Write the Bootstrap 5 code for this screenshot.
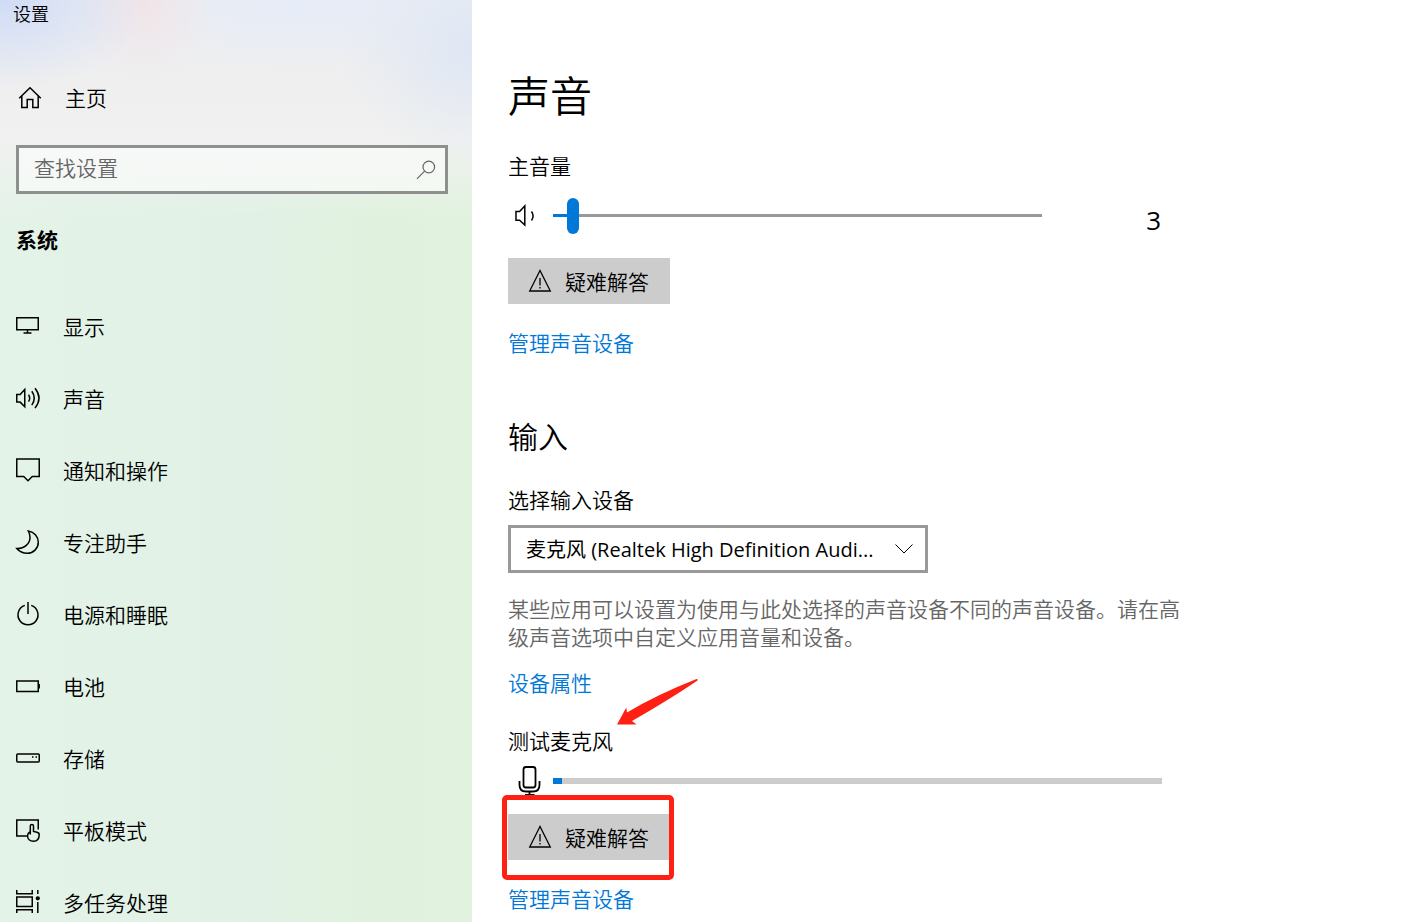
<!DOCTYPE html>
<html lang="zh-CN">
<head>
<meta charset="utf-8">
<meta name="viewport" content="width=device-width, initial-scale=1">
<title>设置</title>
<link href="https://cdn.jsdelivr.net/npm/bootstrap@5.3.0/dist/css/bootstrap.min.css" rel="stylesheet">
<style>
  :root { --accent: #0078d7; --marker: #ff2014; }
  body {
    font-family: "Open Sans", "Noto Sans CJK SC", sans-serif;
    font-size: 21px; line-height: 28px; font-weight: 350; color: #000; background: #fff;
  }
  svg { fill: none; stroke: currentColor; stroke-width: 1.5; flex: none; display: block; overflow: visible; }
  .pane { overflow-y: auto; scrollbar-width: none; }
  .pane::-webkit-scrollbar { display: none; }

  /* navigation pane */
  .side {
    flex: 0 0 472px;
    background:
      radial-gradient(ellipse 150px 90px at 0 0, #d0dcf6, #d0dcf600),
      radial-gradient(ellipse 70px 80px at 145px 0, #f1e5e8, #f1e5e800),
      radial-gradient(ellipse 130px 110px at 100% 50px, #dfe7f4, #dfe7f400),
      radial-gradient(ellipse 170px 70px at 300px 0, #e6ecf8, #e6ecf800),
      linear-gradient(#ebedf2 0, #efefef 90px, #f0f1f0 140px, #f0f1f000 220px),
      linear-gradient(90deg, #e4f3e8, #e1f1e5 55%, #e0f2de 80%, #e1f3df);
  }
  .window-name { font-size: 18px; padding-left: 13px; margin-bottom: 46px; }
  .home-link { height: 48px; padding-left: 18px; gap: 23px; margin-bottom: 23px; }
  .search { margin: 0 24px 32px 16px; border: 3px solid #8d908e; background: #ffffff80; height: 49px; padding-right: 9px; color: #666; }
  .search input { font-size: 21px; line-height: 28px; font-weight: 350; padding: 0 15px 4px; color: #000; }
  .search input::placeholder { color: #666; opacity: 1; }
  .search svg { stroke-width: 1.2; }
  .section-name { font-size: 21px; line-height: 28px; padding-left: 16px; margin-bottom: 37px; }
  .side .nav-link { height: 72px; padding: 0 16px; gap: 23px; color: #000; }

  /* page content */
  .content { padding: 68px 36px 8px; }
  .content-inner { max-width: 680px; }
  h1, h2 { font-weight: 350; }
  h1 { font-size: 42px; line-height: 56px; margin-bottom: 28px; }
  h2 { font-size: 30px; line-height: 40px; margin: 60px 0 29px; }
  .level-row { max-width: 654px; }
  .level-icon { width: 45px; }
  .volume { height: 38px; margin: 16px 0 24px; }
  .level-value { width: 120px; font-size: 26px; font-weight: 400; padding: 9px 1px 0 0; }
  .level-slider { appearance: none; -webkit-appearance: none; height: 36px; min-width: 0; background: none; }
  .level-slider::-webkit-slider-runnable-track {
    height: 3px;
    background: linear-gradient(var(--accent), var(--accent)) no-repeat 0 0 / var(--level) 100%, #999;
  }
  .level-slider::-webkit-slider-thumb {
    -webkit-appearance: none; width: 12px; height: 36px; margin-top: -16px; border-radius: 6px; background: var(--accent);
  }
  .btn-fix {
    width: 162px; height: 46px; padding: 2px 20px 0; gap: 13px; font-size: 21px; line-height: 28px; font-weight: 350;
    color: #000; background: #ccc; border: 0; border-radius: 0;
  }
  .btn-fix:hover { background: #bbb; }
  .btn-fix svg { stroke-width: 1.3; margin-bottom: 2px; }
  .page-link-text { color: var(--accent); text-decoration: none; }
  .after-fix { margin-top: 25px; }
  .device { max-width: 420px; height: 48px; margin: 11px 0 22px; }
  .device select {
    font-size: 20px; line-height: 28px; color: #000; padding: 2px 40px 0 15px; height: 48px;
    border: 3px solid #999; border-radius: 0; background: #fff; font-weight: 400;
  }
  .device svg { right: 14px; top: 16px; stroke-width: 1; pointer-events: none; }
  .hint { color: #666; margin-bottom: 18px; }
  .mic-title { margin: 30px 0 10px; }
  .meter { height: 6px; border-radius: 0; background: #ccc; }
  .meter .progress-bar { background: var(--accent); }
  .mic-row { height: 32px; margin-bottom: 17px; }
  .mic-row .level-icon { padding-left: 10px; }
  .mic-row svg { stroke-width: 1.8; }
  .marker-box { inset: -19px -4px -20px -6px; border: 5px solid var(--marker); border-radius: 5px; pointer-events: none; }
  .marker-arrow { left: 100%; bottom: 29px; margin-left: 3px; color: var(--marker); }
</style>
</head>
<body>
<div class="d-flex vh-100 overflow-hidden">
  <aside class="side pane">
    <div class="window-name">设置</div>
    <a href="#" class="home-link d-flex align-items-center text-reset text-decoration-none">
      <svg width="24" height="24" viewBox="0 0 24 24"><path d="M1.2 12.2 12 1.8l10.8 10.4M3.8 10v11.6h5.4v-8h5.6v8h5.4V10"/></svg>
      <span>主页</span>
    </a>
    <form class="search d-flex align-items-center" role="search">
      <input type="search" class="form-control border-0 bg-transparent shadow-none" placeholder="查找设置" aria-label="查找设置">
      <svg width="20" height="20" viewBox="0 0 20 20"><circle cx="12.8" cy="7" r="5.8"/><path d="M8.6 11.2 1 18.8"/></svg>
    </form>
    <h6 class="section-name fw-bold">系统</h6>
    <nav class="nav flex-column">
      <a class="nav-link d-flex align-items-center" href="#"><svg width="24" height="26" viewBox="0 0 24 26"><path d="M.75 3.75h21.5v12H.75zM7.5 19h8M11.5 16v3"/></svg>显示</a>
      <a class="nav-link d-flex align-items-center" href="#"><svg width="24" height="26" viewBox="0 0 24 26"><path d="M.75 8.5h3.4l4.6-5v17.2l-4.6-4.6H.75zM12.5 8.8q2.4 3.4 0 6.8M15.8 5.3q5 6.9 0 13.8M19 2.3q8 9.9 0 19.8"/></svg>声音</a>
      <a class="nav-link d-flex align-items-center" href="#"><svg width="24" height="26" viewBox="0 0 24 26"><path d="M.75 1h22.5v17.5h-7L12 22.7l-4.3-4.2H.75z"/></svg>通知和操作</a>
      <a class="nav-link d-flex align-items-center" href="#"><svg width="24" height="26" viewBox="0 0 24 26"><path d="M12.3 1C18.5 2 22.3 7 22.3 12.3c0 6.2-5 11-11 11C7 23.3 3.2 21.5.8 18.6 8.5 18.8 14 13.5 14 7.5c0-2.5-.6-4.5-1.7-6.5z"/></svg>专注助手</a>
      <a class="nav-link d-flex align-items-center" href="#"><svg width="24" height="26" viewBox="0 0 24 26"><path d="M8.8 3.4a10 10 0 1 0 6.4 0M12 0v12"/></svg>电源和睡眠</a>
      <a class="nav-link d-flex align-items-center" href="#"><svg width="24" height="26" viewBox="0 0 24 26"><path d="M.75 7h21.5v10.5H.75z"/><path d="M23.2 10v4.5"/></svg>电池</a>
      <a class="nav-link d-flex align-items-center" href="#"><svg width="24" height="26" viewBox="0 0 24 26"><rect x=".75" y="8" width="22.5" height="8" rx="1"/><path d="M16 11h1.5M19.5 11H21"/></svg>存储</a>
      <a class="nav-link d-flex align-items-center" href="#"><svg width="24" height="26" viewBox="0 0 24 26"><path d="M11 18H.75V2h21.5v9.5M14.3 16.5V8a1.6 1.6 0 0 1 3.2 0v5.5l3.5.8q2.2.5 2.2 2.5c0 4-2 6.5-5.7 6.5s-6-2.5-6-5.5c0-1.500.8-3 2.8-4.3"/></svg>平板模式</a>
      <a class="nav-link d-flex align-items-center" href="#"><svg width="24" height="26" viewBox="0 0 24 26"><path d="M.75 0v3.7h15.5V0M.75 7h15.5v9.5H.75zM.75 22.900v-3.200h15.500v3.200M21.800 0v4M21.800 12v10.900"/><circle cx="21.8" cy="8.3" r="1.4" fill="currentColor"/></svg>多任务处理</a>
    </nav>
  </aside>

  <main class="content pane flex-grow-1">
    <div class="content-inner">
      <h1>声音</h1>

      <label for="volume" class="d-block">主音量</label>
      <div class="level-row volume d-flex align-items-center">
        <div class="level-icon ps-2"><svg width="24" height="26" viewBox="0 0 24 26"><path d="M0 9.500h3.600l5.200-5.500v19l-5.200-4.700H0zM15.500 9.500q3.200 4.500 0 9"/></svg></div>
        <input type="range" id="volume" class="level-slider flex-grow-1 p-0 m-0" min="0" max="100" value="3" style="--level:3%">
        <output for="volume" class="level-value text-end">3</output>
      </div>
      <button type="button" class="btn btn-fix d-flex align-items-center">
        <svg width="24" height="24" viewBox="0 0 24 24"><path d="M12 1.500 1.700 22h20.600zM12 9v7.500M12 18v1.500"/></svg>
        <span>疑难解答</span>
      </button>
      <div class="after-fix"><a href="#" class="page-link-text">管理声音设备</a></div>

      <h2>输入</h2>
      <label for="mic" class="d-block">选择输入设备</label>
      <div class="device position-relative">
        <select id="mic" class="form-select shadow-none"><option>麦克风 (Realtek High Definition Audi...</option></select>
        <svg class="position-absolute" width="20" height="16" viewBox="0 0 20 16"><path d="M1.500 3.500 10 12l8.500-8.500"/></svg>
      </div>
      <p class="hint">某些应用可以设置为使用与此处选择的声音设备不同的声音设备。请在高级声音选项中自定义应用音量和设备。</p>
      <div><a href="#" class="page-link-text">设备属性</a></div>

      <div class="mic-title"><span class="position-relative">测试麦克风<svg class="marker-arrow position-absolute" width="84" height="48" viewBox="0 0 84 48"><path d="M1 46.500 10.300 29.500 11 34.500Q40 17 80.500 1q2 0 1 1.500Q56 20 16 43L20.500 46.500z" fill="currentColor" stroke="none"/></svg></span></div>
      <div class="level-row mic-row d-flex align-items-center">
        <div class="level-icon"><svg width="24" height="32" viewBox="0 0 24 32"><rect x="5.5" y="2" width="12" height="20.5" rx="2.5"/><path d="M1.500 16v4q0 6.500 6.500 6.500h7q6.500 0 6.500-6.500v-4M11.500 26.500V30M7 30h9.500"/></svg></div>
        <div class="progress meter flex-grow-1" role="progressbar" aria-label="测试麦克风" aria-valuenow="1.5" aria-valuemin="0" aria-valuemax="100">
          <div class="progress-bar" style="width:1.5%"></div>
        </div>
      </div>
      <div class="position-relative d-inline-block align-top">
        <button type="button" class="btn btn-fix d-flex align-items-center">
          <svg width="24" height="24" viewBox="0 0 24 24"><path d="M12 1.500 1.700 22h20.600zM12 9v7.500M12 18v1.500"/></svg>
          <span>疑难解答</span>
        </button>
        <div class="marker-box position-absolute"></div>
      </div>
      <div class="after-fix"><a href="#" class="page-link-text">管理声音设备</a></div>
    </div>
  </main>
</div>
<script src="https://cdn.jsdelivr.net/npm/bootstrap@5.3.0/dist/js/bootstrap.bundle.min.js"></script>
<script>
  const slider = document.getElementById('volume');
  slider.addEventListener('input', () => {
    slider.style.setProperty('--level', slider.value + '%');
    document.querySelector('.level-value').textContent = slider.value;
  });
</script>
</body>
</html>
